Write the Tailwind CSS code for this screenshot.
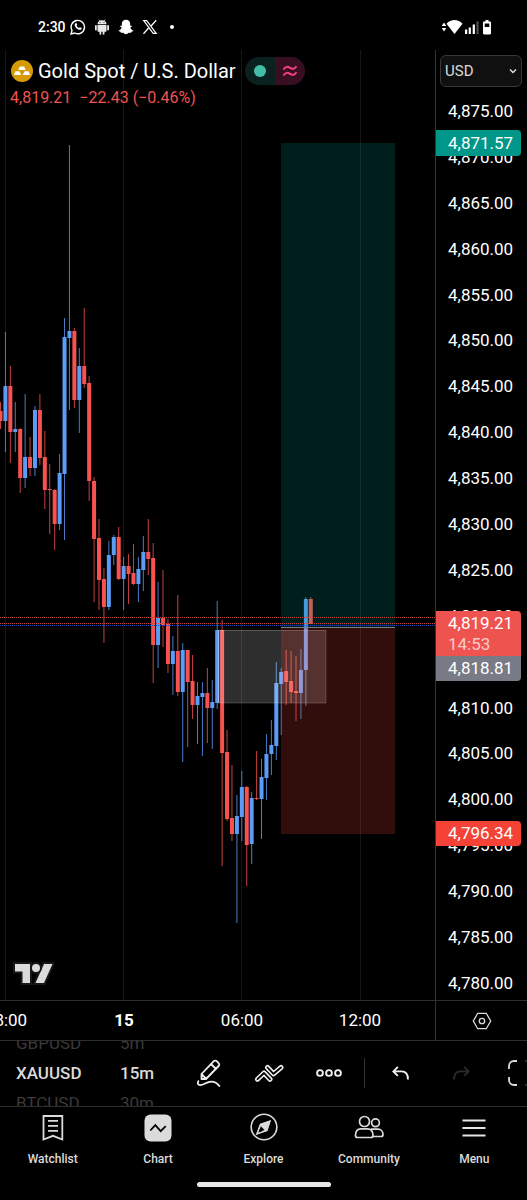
<!DOCTYPE html>
<html lang="en">
<head>
  <meta charset="UTF-8" />
  <meta name="viewport" content="width=device-width, initial-scale=1.0" />
  <title>XAUUSD Chart</title>
  <script src="https://cdn.jsdelivr.net/npm/@tailwindcss/browser@4"></script>
</head>
<body class="bg-black text-white font-['Roboto',sans-serif] overflow-x-hidden">

  <!-- === STATUS BAR === -->
  <div class="h-[50px] pt-1 pl-[38px] pr-[35px] flex items-center justify-between">
    <div class="flex items-center gap-2">
      <span class="text-[14px] font-medium -mr-1">2:30</span>
      <svg class="size-4" viewBox="0 0 16 16" fill="none" stroke="white">
        <path stroke-width="1.4" d="M1 15l1-3.6A6.7 6.7 0 1 1 4.700 14z" />
        <path fill="white" stroke="none" d="M5.600 4.200c.5-.4.9-.2 1.100.2l.5 1.200c.1.300-.4.800-.6 1.100.5 1.100 1.400 1.900 2.500 2.400.4-.4.700-.9 1-.8l1.400.7c.4.300.2.900-.2 1.300-.8.800-1.900.6-3 .1C6.600 9.700 5.500 8.500 4.900 7.100c-.4-1.100-.2-2.200.7-2.900z" />
      </svg>
      <svg class="size-4" viewBox="0 0 16 16" fill="#e8e8e8">
        <path d="M3.500 5.200a4.500 4 0 0 1 9 0zM3.500 6h9v5.800c0 .6-.4 1-1 1h-1v2a.9.900 0 0 1-1.800 0v-2H7.300v2a.9.900 0 0 1-1.800 0v-2h-1c-.6 0-1-.4-1-1z" />
        <rect x="1" y="6" width="1.800" height="5.500" rx=".9" />
        <rect x="13.200" y="6" width="1.800" height="5.500" rx=".9" />
        <path stroke="#e8e8e8" stroke-width=".7" d="M5 .5l1 1.600M11 .5l-1 1.600" />
        <circle cx="6" cy="3.600" r=".5" fill="black" />
        <circle cx="10" cy="3.600" r=".5" fill="black" />
      </svg>
      <svg class="size-4" viewBox="0 0 16 16" fill="white">
        <path d="M8 .8c2.700 0 4.200 1.800 4.200 4.200v1.700c.6.300 1.400-.4 1.700.2.200.7-1.600 1.100-1.500 1.800.4 1.400 1.600 2.400 3 2.800.3.700-1 1-1.800 1.200-.3.400-.1.900-.6 1-.7.100-1.500-.2-2.200.1C9.900 14.300 9.200 15.200 8 15.200s-1.900-.9-2.800-1.400c-.7-.3-1.500 0-2.200-.1-.5-.1-.3-.6-.6-1-.8-.2-2.100-.5-1.800-1.200 1.400-.4 2.600-1.400 3-2.800.1-.7-1.700-1.100-1.500-1.800.3-.6 1.100.1 1.700-.2V5C3.800 2.600 5.300.8 8 .8z" />
      </svg>
      <svg class="size-4" viewBox="0 0 16 16" fill="none" stroke="white">
        <path stroke-width="1.200" d="M1.700 1.600h3l9.500 12.800h-3z" />
        <path stroke-width="1.300" d="M14.200 1.300L9.100 7M1.500 14.700l5.300-6" />
      </svg>
      <span class="ml-1 size-1 rounded-full bg-white"></span>
    </div>
    <svg class="w-[51px] h-4" viewBox="0 0 51 16" fill="white">
      <path d="M3 3.500L5.300 7H.7zM3 12.500L.7 9h4.600z" />
      <path d="M5.500 4.800C10-.2 17-.2 21.500 4.800L13.500 15z" />
      <path d="M24 10.500h2.200V15H24zM27.700 8.500h2.200V15h-2.200zM31.700 5.500h2.200V15h-2.200z" />
      <path fill="#555" d="M35.500 2.500h2V15h-2z" />
      <path d="M44.500 1h3v1.500h1.300c.7 0 1.200.5 1.200 1.200v10.600c0 .7-.5 1.200-1.200 1.200h-5.600c-.7 0-1.200-.5-1.200-1.200V3.700c0-.7.5-1.200 1.200-1.200h1.300z" />
      <path fill="black" d="M43.700 4.500h4.600V8h-4.600z" />
    </svg>
  </div>

  <!-- === CHART + PRICE SCALE === -->
  <main class="flex h-[950px]">
    <section class="relative flex-1 min-w-0">
      <svg id="chart" class="block w-full h-full" viewBox="0 50 435 950" preserveAspectRatio="none">
        <path stroke="#171717" d="M5.500 50V1000M123.500 50V1000M241.500 50V1000M360.500 50V1000" />
        <g id="candles"></g>

        <!-- grey zone -->
        <rect x="218" y="630" width="108" height="73" fill="#fff" fill-opacity=".18" />
        <rect x="218.500" y="630.500" width="107.500" height="72.500" fill="none" stroke="#fff" stroke-opacity=".2" />

        <!-- long position: target and stop -->
        <rect x="281" y="143" width="114" height="484" fill="#009688" fill-opacity=".2" />
        <rect x="281" y="628" width="114" height="206" fill="#f44336" fill-opacity=".2" />
        <path stroke="#787b86" d="M281 627.500H395" />

        <!-- price lines -->
        <path stroke="#c8403e" stroke-dasharray="1 1" d="M0 617.500H435M0 623.500H435" />
        <path stroke="#1e46b8" stroke-dasharray="1 1" d="M0 625.500H435" />
      </svg>

      <header class="absolute left-[11px] top-[7px]">
        <div class="flex items-center h-7">
          <svg class="size-[22px]" viewBox="0 0 22 22" fill="white">
            <circle cx="11" cy="11" r="11" fill="#d69a05" />
            <path d="M8.800 6.500h4.400l1.500 3.500H7.300zM4.500 11.300h4l1.700 3.700H2.800zM13.500 11.300h4l1.700 3.700h-7.400z" />
          </svg>
          <h1 class="ml-[5px] text-[20px] leading-7 whitespace-nowrap">Gold Spot / U.S. Dollar</h1>
          <div class="ml-[9px] flex h-7 rounded-full overflow-hidden">
            <span class="w-[30px] bg-[#09211f] flex items-center justify-center">
              <span class="size-3 rounded-full bg-[#42bda8]"></span>
            </span>
            <span class="w-[30px] bg-[#380f20] flex items-center justify-center">
              <svg class="w-4 h-3" viewBox="0 0 16 12" fill="none" stroke="#f7407f" stroke-width="2">
                <path d="M1.500 4.600C3.500 1 6 1.500 8 2.900S12.500 4.500 14.500 1.300M1.500 10.600C3.500 7 6 7.500 8 8.900s4.500 1.600 6.500-1.600" />
              </svg>
            </span>
          </div>
        </div>
        <p class="-ml-px mt-[3px] flex gap-2 text-[16px] leading-5 text-[#ef5350] whitespace-nowrap">
          <span>4,819.21</span><span>−22.43 (−0.46%)</span>
        </p>
      </header>

      <svg class="absolute left-[13px] bottom-[15px] w-[41px] h-[23px]" viewBox="0 0 41 23" fill="#dbdbdb" stroke="#171717" stroke-width="4" paint-order="stroke">
        <path d="M2 2h15v19H9.500V9.500H2z" />
        <path d="M31 2h8.500L31 21h-8.500z" />
        <circle cx="23" cy="6" r="4" />
      </svg>
    </section>

    <aside class="relative w-[92px] shrink-0 border-l border-[#333] flex flex-col pt-[5px] pb-[7px]">
      <div class="relative ml-1 mr-[5px]">
        <label for="currency" class="sr-only">Currency</label>
        <select id="currency" class="appearance-none block w-full h-8 pl-1 rounded-md border border-[#383838] bg-[#101010] text-[15px] text-[#dbdbdb]">
          <option>USD</option>
          <option>EUR</option>
        </select>
        <svg class="absolute right-[5px] top-3 w-2 h-2 pointer-events-none" viewBox="0 0 8 8" fill="none" stroke="#dbdbdb" stroke-width="1.500">
          <path d="M1 2.500L4 5.500 7 2.500" />
        </svg>
      </div>
      <ul id="prices" class="mt-[14px] flex-1 flex flex-col justify-between pl-3 text-[17px] leading-5"></ul>

      <div class="absolute left-0 top-20 w-[85px] h-[26px] pl-3 rounded-r-sm bg-[#009688] text-[17px] leading-[26px]">4,871.57</div>
      <div class="absolute left-0 top-[561px] w-[85px] h-[45px] pt-[2px] pl-3 rounded-tr-sm bg-[#ef5350] text-[17px] leading-[21px]">
        4,819.21<br /><span class="text-[#fbc9c8]">14:53</span>
      </div>
      <div class="absolute left-0 top-[606px] w-[85px] h-[25px] pl-3 rounded-br-sm bg-[#787b86] text-[17px] leading-[25px]">4,818.81</div>
      <div class="absolute left-0 top-[771px] w-[85px] h-[25px] pl-3 rounded-r-sm bg-[#f44336] text-[17px] leading-[25px]">4,796.34</div>
    </aside>
  </main>

  <!-- === TIME SCALE === -->
  <div class="flex h-[41px] border-y border-[#2e2e2e]">
    <div class="flex-1 min-w-0 overflow-hidden">
      <div class="-ml-[53px] flex h-full items-center text-[17px] text-center">
        <span class="w-[118px] shrink-0">18:00</span>
        <span class="w-[118px] shrink-0 font-bold">15</span>
        <span class="w-[118px] shrink-0">06:00</span>
        <span class="w-[118px] shrink-0">12:00</span>
      </div>
    </div>
    <button aria-label="Chart settings" class="w-[92px] shrink-0 border-l border-[#333] flex items-center justify-center">
      <svg class="size-5" viewBox="0 0 20 20" fill="none" stroke="#dbdbdb" stroke-width="1.300">
        <path d="M5.700 2.300h8.600l4.400 7.700-4.400 7.700H5.700L1.300 10z" />
        <circle cx="10" cy="10" r="2.700" />
      </svg>
    </button>
  </div>

  <!-- === TOOLBAR === -->
  <div class="flex h-[66px] items-center overflow-hidden border-b border-[#2e2e2e] pl-4 pb-[2px] text-[#dbdbdb]">
    <div class="w-[104px] shrink-0 flex flex-col items-start text-[17px] leading-[30px]">
      <button class="text-[#3a3a3a]">GBPUSD</button>
      <button class="font-medium">XAUUSD</button>
      <button class="text-[#3a3a3a]">BTCUSD</button>
    </div>
    <div class="w-[59px] shrink-0 flex flex-col items-start text-[17px] leading-[30px]">
      <button class="text-[#3a3a3a]">5m</button>
      <button class="font-medium">15m</button>
      <button class="text-[#3a3a3a]">30m</button>
    </div>
    <button aria-label="Draw" class="w-[60px] shrink-0 flex justify-center">
      <svg class="size-7" viewBox="0 0 28 28" fill="none" stroke="#f0f0f0" stroke-width="1.800" stroke-linejoin="round" stroke-linecap="round">
        <path d="M6.500 20v-5L18.800 2.200a2 2 0 0 1 2.900 0l1.900 1.900a2 2 0 0 1 0 2.900L11 20zM6.500 15l4.700 4.800M16 5l5 5" />
        <path d="M3.300 22.200c-1 2.600-.3 4 2 3.900 5-.3 6-3.500 11-3.500 3.500 0 6 1.500 8 4.400" />
      </svg>
    </button>
    <button aria-label="Indicators" class="w-[60px] shrink-0 flex justify-center">
      <svg class="w-[30px] h-5" viewBox="0 0 30 20" fill="none" stroke-linejoin="round" stroke-linecap="round">
        <path stroke="#f0f0f0" stroke-width="5" d="M3.500 16.200L10 10l6 6.300" />
        <path stroke="black" stroke-width="1.800" d="M3.500 16.200L10 10l6 6.300" />
        <path stroke="#f0f0f0" stroke-width="5" d="M13.500 4.500l6 6.300 7.500-6.300" />
        <path stroke="black" stroke-width="1.800" d="M13.500 4.500l6 6.300 7.500-6.300" />
      </svg>
    </button>
    <button aria-label="More" class="w-[60px] shrink-0 flex justify-center">
      <svg class="w-[26px] h-2" viewBox="0 0 26 8" fill="none" stroke="#f0f0f0" stroke-width="1.900">
        <circle cx="4" cy="4" r="2.900" /><circle cx="13" cy="4" r="2.900" /><circle cx="22" cy="4" r="2.900" />
      </svg>
    </button>
    <span class="w-px h-[30px] ml-[5px] shrink-0 bg-[#303030]"></span>
    <button aria-label="Undo" class="w-[71px] shrink-0 flex justify-center">
      <svg class="w-[17px] h-[14px]" viewBox="0 0 16 13" fill="none" stroke="#f0f0f0" stroke-width="1.800">
        <path d="M5.500.8L1.300 5l4.200 4.200M1.300 5H9c3.700 0 6 2.500 6 7.500" />
      </svg>
    </button>
    <button aria-label="Redo" class="w-[50px] shrink-0 flex justify-center" disabled>
      <svg class="w-[17px] h-[14px]" viewBox="0 0 16 13" fill="none" stroke="#2a2a2a" stroke-width="1.800">
        <path d="M10.500.8L14.700 5l-4.200 4.200M14.700 5H7c-3.700 0-6 2.500-6 7.500" />
      </svg>
    </button>
    <button aria-label="Fullscreen" class="ml-[22px] shrink-0">
      <svg class="size-[26px]" viewBox="0 0 26 26" fill="none" stroke="#dbdbdb" stroke-width="1.800">
        <path d="M9 1H6a5 5 0 0 0-5 5v3M1 17v3a5 5 0 0 0 5 5h3" />
        <path stroke="#222" d="M17 1h3a5 5 0 0 1 5 5v3M25 17v3a5 5 0 0 1-5 5h-3" />
      </svg>
    </button>
  </div>

  <!-- === BOTTOM NAV === -->
  <nav class="flex pt-[6px] text-[12px] leading-4 font-medium text-[#dbdbdb]">
    <a href="#" class="flex-1 flex flex-col items-center gap-2">
      <svg class="size-[30px]" viewBox="0 0 30 30" fill="none" stroke="#dbdbdb" stroke-width="1.800">
        <path d="M5.500 3h18.800v23.500L15 22.800l-9.500 3.700zM10 7.800h10M10 12.800h10M10 17.800h10" />
      </svg>
      Watchlist
    </a>
    <a href="#" class="flex-1 flex flex-col items-center gap-2">
      <svg class="size-[30px]" viewBox="0 0 30 30" fill="none">
        <rect x="1.500" y="1.500" width="27" height="27" rx="6" fill="#dbdbdb" />
        <path stroke="black" stroke-width="1.800" d="M7.300 17.500l5-5.300 5.400 6 5-5" />
      </svg>
      Chart
    </a>
    <a href="#" class="flex-1 flex flex-col items-center gap-2">
      <svg class="size-[30px]" viewBox="0 0 30 30" fill="none" stroke="#dbdbdb" stroke-width="1.600">
        <circle cx="15" cy="14" r="12.800" />
        <path fill="#dbdbdb" stroke="none" d="M22 7l-3.500 11-4.200 1.300-4-4L11.500 11z" />
        <path d="M20.500 8.500L11.500 11.500 8 21l9.700-3.700z" />
        <path fill="black" stroke="none" d="M11.800 13.200l3.800 3.800-5.700 2.200z" />
      </svg>
      Explore
    </a>
    <a href="#" class="flex-1 flex flex-col items-center gap-2">
      <svg class="size-[30px]" viewBox="0 0 30 30" fill="none" stroke="#dbdbdb" stroke-width="1.700">
        <circle cx="10.500" cy="8.500" r="5" />
        <circle cx="21.500" cy="9.800" r="3.900" />
        <path d="M1.500 22.500c0-4.500 2.500-6.700 5.500-6.700h6.500c3 0 5.500 2.200 5.500 6.700 0 1.300-.8 2-2 2H3.500c-1.200 0-2-.7-2-2z" />
        <path d="M17 16.200h7c3 0 5 2.300 5 5.300 0 1.200-.7 2-1.900 2H19" />
      </svg>
      Community
    </a>
    <a href="#" class="flex-1 flex flex-col items-center gap-2">
      <svg class="size-[30px]" viewBox="0 0 30 30" fill="none" stroke="#e4e4e4" stroke-width="2">
        <path d="M3.500 7.500h23M3.500 15h23M3.500 22.500h23" />
      </svg>
      Menu
    </a>
  </nav>
  <div class="mx-auto mt-[15px] mb-3 w-[134px] h-[5px] rounded-full bg-[#e8e8e8]"></div>

  <script>
    // [high, body top, body bottom, low, up] one entry per 15 minutes
    const candles = [
      [402, 411, 421, 429, 0], [332, 386, 421, 452, 1], [366, 386, 432, 463, 0], [402, 429, 432, 452, 1],
      [428, 429, 478, 493, 0], [394, 457, 478, 488, 1], [437, 457, 468, 476, 0], [406, 410, 468, 476, 1],
      [394, 410, 458, 465, 0], [431, 457, 490, 509, 0], [464, 489, 490, 534, 0], [489, 490, 524, 550, 0],
      [454, 473, 524, 530, 1], [318, 337, 474, 540, 1], [145, 331, 338, 410, 1], [328, 331, 400, 408, 0],
      [348, 366, 400, 433, 1], [308, 366, 384, 388, 0], [376, 383, 481, 501, 0], [477, 481, 539, 602, 0],
      [519, 538, 580, 610, 0], [568, 579, 607, 643, 0], [541, 555, 607, 610, 1], [535, 537, 555, 565, 1],
      [527, 537, 579, 580, 0], [557, 566, 579, 610, 1], [554, 566, 574, 604, 0], [544, 573, 584, 585, 0],
      [557, 569, 584, 602, 1], [536, 552, 570, 591, 1], [519, 552, 559, 575, 0], [543, 558, 645, 683, 0],
      [582, 618, 645, 668, 1], [570, 618, 625, 647, 0], [619, 624, 664, 673, 0], [636, 651, 664, 695, 1],
      [595, 651, 692, 696, 0], [643, 650, 692, 762, 1], [650, 650, 682, 747, 0], [655, 681, 705, 719, 0],
      [682, 696, 705, 744, 1], [682, 693, 697, 756, 1], [668, 693, 708, 743, 0], [680, 702, 708, 749, 1],
      [601, 630, 703, 709, 1], [620, 630, 753, 866, 0], [730, 752, 819, 821, 0], [765, 818, 834, 841, 0],
      [795, 816, 834, 923, 1], [771, 787, 817, 841, 1], [786, 787, 845, 886, 0], [792, 798, 844, 864, 1],
      [751, 798, 799, 800, 0], [759, 777, 799, 839, 1], [734, 754, 778, 800, 1], [720, 745, 754, 775, 1],
      [662, 683, 746, 760, 1], [668, 672, 684, 735, 1], [650, 671, 682, 705, 0], [651, 681, 692, 703, 0],
      [656, 691, 693, 721, 0], [649, 670, 693, 719, 1], [597, 599, 670, 706, 1], [597, 599, 624, 624, 0]
    ];
    const step = 4.925;

    document.getElementById("candles").innerHTML = candles.map(([high, top, bottom, low, up], i) => {
      const x = 0.5 + i * step;
      const color = up ? "#5b9cf6" : "#f7524f";
      return `
        <path stroke="${color}" stroke-opacity=".8" d="M${x} ${high}V${low}" />
        <rect x="${x - 2}" y="${top}" width="4" height="${bottom - top}" fill="${color}" />
      `;
    }).join("");

    // price labels from 4,875 down to 4,780
    const list = document.getElementById("prices");
    for (let price = 4875; price >= 4780; price -= 5) {
      const li = document.createElement("li");
      li.textContent = price.toLocaleString("en-US", { minimumFractionDigits: 2 });
      list.appendChild(li);
    }
  </script>

</body>
</html>
